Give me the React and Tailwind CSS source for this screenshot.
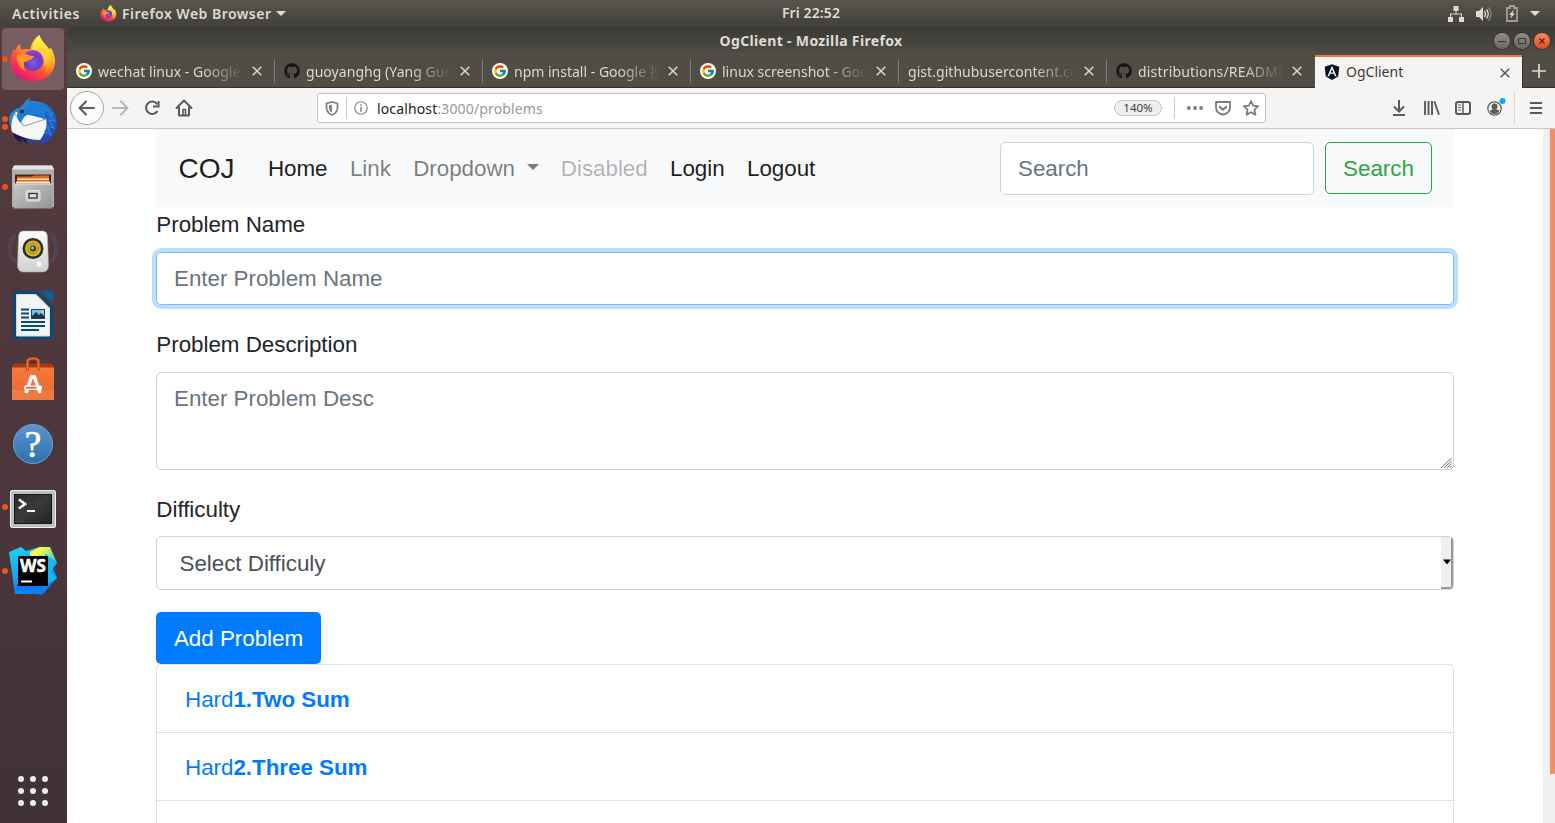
import React from "react";
import { FcGoogle } from "react-icons/fc";
import { FaGithub, FaAngular } from "react-icons/fa";

const tabs = [
  { icon: "google", title: "wechat linux - Google 搜索", spacing: "tracking-[0.03px]" },
  { icon: "github", title: "guoyanghg (Yang Guo)", spacing: "tracking-[0.05px]" },
  { icon: "google", title: "npm install - Google 搜索", spacing: "tracking-[0px]" },
  { icon: "google", title: "linux screenshot - Google", spacing: "tracking-[0px]" },
  { icon: null, title: "gist.githubusercontent.com", spacing: "tracking-[0.05px]" },
  { icon: "github", title: "distributions/README.md", spacing: "tracking-[0.18px]" },
];

function Caret({ className }) {
  return (
    <svg className={className} width="10" height="5" viewBox="0 0 10 5">
      <path d="M0 0h10L5 5z" fill="currentColor" />
    </svg>
  );
}

function Firefox({ size, id }) {
  return (
    <svg width={size} height={size} viewBox="0 0 48 48" className="shrink-0">
      <defs>
        <linearGradient id={id + "a"} x1="0.8" y1="0.05" x2="0.25" y2="0.95">
          <stop offset="0" stopColor="#fff44f" />
          <stop offset="0.35" stopColor="#ffa72a" />
          <stop offset="0.65" stopColor="#ff5034" />
          <stop offset="1" stopColor="#e8127c" />
        </linearGradient>
        <radialGradient id={id + "b"} cx="0.5" cy="0.6" r="0.6">
          <stop offset="0" stopColor="#7a5cf5" />
          <stop offset="0.6" stopColor="#6a3fc4" />
          <stop offset="1" stopColor="#b833e1" />
        </radialGradient>
        <linearGradient id={id + "c"} x1="0.4" y1="0" x2="0.7" y2="1">
          <stop offset="0" stopColor="#fff44f" />
          <stop offset="0.6" stopColor="#ffd02f" />
          <stop offset="1" stopColor="#ff8a1f" />
        </linearGradient>
      </defs>
      <path
        d="M11 9c0 3 .4 5 1.600 6C15 13.800 18 13.500 21 14.500 22 8 26 3 30.500 0c1.300 5.500 6 9 9.500 14l2-1c3 5 4.500 10 4 15-1 11.500-11 18.500-22 18.500S1 39 1.200 26C1.500 21 3 17 5 14l1 2c1-3 3-5.500 5-7z"
        fill={"url(#" + id + "a)"}
      />
      <path
        d="M30.500 0c1.300 5.500 6 9 9.500 14 5 8 3 19-4 25 2-6 1-13-2-17-3-4-9-5-11-7 .500-6 3-12 7.500-15z"
        fill={"url(#" + id + "c)"}
      />
      <circle cx="24" cy="25.500" r="10.500" fill={"url(#" + id + "b)"} />
      <path
        d="M8 20c4-2 8-2 11 0 2 1.200 4 .500 6 1-.500 2.500-3 3.500-6 4.500 0 0-1 2-4 1 0 4-1 6 2 10-6-3-10-9-9-16.500z"
        fill="#ff9722"
      />
      <path d="M28 15c8 3 9 11 6 17 5-4 7-12 3-17-2-2-6-2-9 0z" fill="#ffcb33" opacity="0.8" />
    </svg>
  );
}

function Thunderbird() {
  return (
    <svg width="50" height="50" viewBox="0 0 50 50">
      <defs>
        <linearGradient id="tb" x1="0.2" y1="0" x2="0.8" y2="1">
          <stop offset="0" stopColor="#2d9be8" />
          <stop offset="0.5" stopColor="#1769c9" />
          <stop offset="1" stopColor="#2a3f9e" />
        </linearGradient>
      </defs>
      <path
        d="M12 10C17 3 25 2 31 4c9 1 16 9 17.500 17 .500 3 0 5 0 7-1 10-9 18-18 20 2-2 3-3 4-5-4 2-8 1-12-1l2 5c-3-2-6-5-8-9l-1 4C10 38 2 32 1 22c0-6 5-11 11-12z"
        fill="url(#tb)"
      />
      <path d="M5 36c2 5 5 7 9 9l-1-5 7 7-2-6 8 3-20-10z" fill="#211554" />
      <path d="M8 14l30 7c2 7-1 14-6 21C23 42 12 39 4 34 2 27 4 19 8 14z" fill="#f7f7f7" />
      <path d="M7 16l9 12 22-7" fill="none" stroke="#a7abb0" strokeWidth="1.200" />
      <path d="M10 13c2-6 10-10 15-9 6 1 12 4 13 9l-2 9c-4-6-10-7-15-6-4 1-7 6-8 9-4-3-5-7-3-12z" fill="#1f7bd3" />
      <path d="M12 14C15 4 19 1 22 0c-1 2-1 3 0 5" fill="#2a86c8" />
      <path d="M36 10l9 6-4 0 6 7-6-1 5 8-7-2 4 9-7-4" fill="none" stroke="#2b87da" strokeWidth="1.100" />
      <circle cx="14" cy="13.500" r="2" fill="#332c2f" />
    </svg>
  );
}

function Files() {
  return (
    <svg width="44" height="46" viewBox="0 0 44 46">
      <defs>
        <linearGradient id="fl" x1="0" y1="0" x2="1" y2="1">
          <stop offset="0" stopColor="#c6c6c6" />
          <stop offset="1" stopColor="#949494" />
        </linearGradient>
      </defs>
      <path d="M3 1.500h38l2 4V43H1V5.500z" fill="#aeaeae" />
      <path d="M3 1.500h38l2 4H1z" fill="#e6e6e6" />
      <path d="M4 10.500h36v10H4z" fill="#4a2115" />
      <path d="M6 12.500h15l2-1h15v8H6z" fill="#e06a1c" />
      <path d="M6 14.500h32v1.500H6zM5 17.500h34v2H5z" fill="#fbe3c4" />
      <path d="M2.500 20h39v24.500h-39z" fill="url(#fl)" />
      <path d="M2.500 20h39" stroke="#e2e2e2" />
      <rect x="15" y="26.500" width="14" height="10.500" rx="2" fill="#d0d0d0" stroke="#e5e5e5" />
      <rect x="18" y="29.500" width="8" height="4.500" fill="#e2e2e2" stroke="#333" strokeWidth="1.300" />
    </svg>
  );
}

function Speaker() {
  return (
    <svg className="mt-[2px]" width="50" height="46" viewBox="0 0 50 46">
      <defs>
        <linearGradient id="sp" x1="0" y1="0" x2="0" y2="1">
          <stop offset="0" stopColor="#fdfdfd" />
          <stop offset="1" stopColor="#cfcfcf" />
        </linearGradient>
      </defs>
      <path
        d="M8 6c-7 9-7 19 0 28M5 6c-6 9-6 18 0 27M42 6c7 9 7 19 0 28M45 6c6 9 6 18 0 27"
        fill="none"
        stroke="#4c526a"
        strokeWidth="1.800"
        opacity="0.6"
      />
      <path d="M15 2h20q4 0 4.500 6l1 28q0 7-6 7H15.500q-6 0-6-7l1-28q.5-6 4.500-6z" fill="url(#sp)" stroke="#aaa" strokeWidth="0.600" />
      <circle cx="25" cy="19.500" r="10.500" fill="#2b2b28" />
      <circle cx="25" cy="19.500" r="8" fill="#d4b423" />
      <circle cx="25" cy="19.500" r="5" fill="none" stroke="#9d851c" strokeWidth="1" />
      <circle cx="25" cy="19.500" r="3" fill="#373737" />
      <circle cx="24.500" cy="19" r="1.500" fill="#bdbdbd" />
      <circle cx="31" cy="35" r="3.500" fill="#f4f4f4" stroke="#bbb" strokeWidth="0.600" />
    </svg>
  );
}

function Writer() {
  return (
    <svg width="40" height="48" viewBox="0 0 40 48">
      <path d="M2 0h22l16 15v31q0 2-2 2H2q-2 0-2-2V2q0-2 2-2z" fill="#064a75" />
      <path d="M27 0h11q2 0 2 2v10z" fill="#0a5f96" />
      <path d="M3.500 3.500H23L36.500 17v28h-33z" fill="#f3f3f3" stroke="#dadada" />
      <path d="M8 18.500h8M8 22.500h8M8 26.500h8M8 31h24M8 35h24M8 39h18" stroke="#064a75" strokeWidth="1.800" />
      <rect x="18.500" y="18.500" width="13" height="9" fill="#7bc0ea" stroke="#064a75" />
      <path d="M19 27v-2l4-4 3 3 2-2 3 3v2z" fill="#1f3643" />
      <circle cx="29.500" cy="20.500" r="1.500" fill="#f3d33a" />
    </svg>
  );
}

function Software() {
  return (
    <svg className="mt-[2px]" width="44" height="46" viewBox="0 0 44 46">
      <defs>
        <linearGradient id="sw" x1="0" y1="0" x2="0" y2="1">
          <stop offset="0" stopColor="#f4793c" />
          <stop offset="1" stopColor="#e9682f" />
        </linearGradient>
      </defs>
      <path d="M3 6.500h38l2 4v4H1v-4z" fill="#a53a14" />
      <path d="M1 10.500h42V43H1z" fill="url(#sw)" />
      <path d="M1 33h42v10H1z" fill="#f28c55" opacity="0.5" />
      <path d="M16.500 14V5q0-3.500 5.500-3.500T27.500 5v9" fill="none" stroke="#c9491a" strokeWidth="3" />
      <path d="M16.500 14V5q0-3.500 5.500-3.500T27.500 5v9" fill="none" stroke="#ee7440" strokeWidth="1.200" />
      <path d="M15 36l5.500-16h3L29 36" fill="none" stroke="#fff" strokeWidth="3.500" />
      <rect x="13" y="28.500" width="18" height="4.500" rx="1.500" fill="#fff" />
      <path d="M14.500 30.700h11" stroke="#e9682f" strokeWidth="1.800" />
    </svg>
  );
}

function Help() {
  return (
    <svg className="mt-[2px]" width="42" height="42" viewBox="0 0 42 42">
      <defs>
        <linearGradient id="hp" x1="0" y1="0" x2="0" y2="1">
          <stop offset="0" stopColor="#5d95cf" />
          <stop offset="1" stopColor="#2c71ae" />
        </linearGradient>
      </defs>
      <circle cx="21" cy="21" r="19.500" fill="url(#hp)" stroke="#6ba3d6" strokeWidth="1" />
      <text
        x="21"
        y="34"
        textAnchor="middle"
        fill="#fff"
        stroke="#fff"
        strokeWidth="0.700"
        fontSize="37"
        fontFamily="Liberation Serif, serif"
      >
        ?
      </text>
    </svg>
  );
}

function Terminal() {
  return (
    <svg className="mt-[3px]" width="46" height="38" viewBox="0 0 46 38">
      <defs>
        <linearGradient id="tm" x1="0" y1="0" x2="1" y2="1">
          <stop offset="0" stopColor="#2b2d2d" />
          <stop offset="0.5" stopColor="#383b3a" />
          <stop offset="1" stopColor="#202222" />
        </linearGradient>
      </defs>
      <rect x="0.500" y="0.500" width="45" height="37" rx="1.500" fill="#bdbdbd" stroke="#f0f0f0" />
      <rect x="4.500" y="4.500" width="37" height="29" fill="url(#tm)" stroke="#151515" />
      <path d="M9 9.500l6 4.500-6 4.500" fill="none" stroke="#fff" strokeWidth="2.600" />
      <path d="M17 21h8" stroke="#fff" strokeWidth="2" />
    </svg>
  );
}

function WebStorm() {
  return (
    <svg width="50" height="50" viewBox="0 0 50 50">
      <defs>
        <linearGradient id="ws" x1="0.3" y1="0" x2="0.7" y2="1">
          <stop offset="0" stopColor="#1bcdf0" />
          <stop offset="1" stopColor="#0a78f5" />
        </linearGradient>
        <linearGradient id="wy" x1="0" y1="0" x2="1" y2="0.8">
          <stop offset="0.3" stopColor="#fcf84a" />
          <stop offset="1" stopColor="#12c8dc" />
        </linearGradient>
      </defs>
      <path d="M1 6l12-5 5 4 13-4h11l-1 11 8 20-14 16H7z" fill="url(#ws)" />
      <path d="M22 6l10-5h10l7 16-5 6-22-8z" fill="url(#wy)" />
      <path d="M37 8l12 8-6 10 6 6-12 8z" fill="#13b6f0" />
      <path d="M8 38l27-1-1 12-27-5z" fill="#087bf8" />
      <rect x="10" y="10" width="30" height="30" fill="#000" />
      <text
        x="12"
        y="26"
        fill="#fff"
        stroke="#fff"
        strokeWidth="0.500"
        fontSize="17"
        textLength="26"
        lengthAdjust="spacingAndGlyphs"
        fontFamily="Open Sans, sans-serif"
        fontWeight="700"
      >
        WS
      </text>
      <path d="M13 35.500h11" stroke="#fff" strokeWidth="2" />
    </svg>
  );
}

function Dot() {
  return <span className="block h-[6px] w-[6px] rounded-full bg-[#e95420]" />;
}

const dock = [
  { el: <Firefox size={48} id="big" />, dots: 1, active: true },
  { el: <Thunderbird />, dots: 2 },
  { el: <Files />, dots: 1 },
  { el: <Speaker />, dots: 0 },
  { el: <Writer />, dots: 0 },
  { el: <Software />, dots: 0 },
  { el: <Help />, dots: 0 },
  { el: <Terminal />, dots: 1 },
  { el: <WebStorm />, dots: 1 },
];

function Dock() {
  return (
    <aside className="flex w-[67px] shrink-0 flex-col items-center bg-linear-to-b from-[#553b40] via-[#4d373c] to-[#403235] pt-px">
      <div className="flex w-full flex-col gap-[2px] pr-[3px] pl-[2px]">
        {dock.map((d, i) => (
          <div
            key={i}
            className={
              "relative flex h-[62px] items-center justify-center rounded-[4px] " + (d.active ? "bg-[#755d61]" : "")
            }
          >
            <div className="absolute top-0 left-0 flex h-full flex-col justify-center gap-[2px]">
              {Array.from({ length: d.dots }, (_, n) => (
                <Dot key={n} />
              ))}
            </div>
            {d.el}
          </div>
        ))}
      </div>
      <div className="mt-auto mr-[2px] mb-[17px] grid grid-cols-3 gap-[6px]">
        {Array.from({ length: 9 }, (_, n) => (
          <span key={n} className="h-[6px] w-[6px] rounded-full bg-[#eeeeec]" />
        ))}
      </div>
    </aside>
  );
}

function TopBar() {
  return (
    <header className="grid h-[27px] shrink-0 grid-cols-[1fr_auto_1fr] items-center bg-linear-to-b from-[#5a564d] to-[#413f3a] font-['Noto_Sans',sans-serif] text-[14px] font-semibold text-[#dfdbd2]">
      <div className="flex items-center pl-[12px]">
        <span className="w-[88px] tracking-[0.55px]">Activities</span>
        <Firefox size={17} id="small" />
        <span className="ml-[5px] tracking-[0.480px]">Firefox Web Browser</span>
        <Caret className="ml-[5px]" />
      </div>
      <span className="translate-x-[33.500px] -translate-y-px tracking-[0.1px]">Fri 22:52</span>
      <div className="flex items-center justify-end pr-[15px]">
        <svg width="16" height="16" viewBox="0 0 16 16" fill="currentColor">
          <path d="M5.500 0h5v5H8.500v2.500H14V11h2v5h-5v-5h2V8.500H3V11h2v5H0v-5h2V7.500h5.500V5h-2z" />
        </svg>
        <svg className="ml-[12px]" width="16" height="16" viewBox="0 0 16 16">
          <path d="M0 5h3l4-4v14l-4-4H0z" fill="currentColor" />
          <path d="M8.500 5q2 3 0 6M10.500 3.500q3.500 4.500 0 9" fill="none" stroke="currentColor" strokeWidth="1.300" />
          <path d="M12.500 1.500q5 6.500 0 13" fill="none" stroke="#858178" strokeWidth="1.400" />
        </svg>
        <svg className="ml-[14px]" width="12" height="17" viewBox="0 0 12 17">
          <path d="M4 1h4v2h3v13H1V3h3z" fill="none" stroke="#a29e95" strokeWidth="1.800" />
          <path d="M8 4.500L3 10h2.500L4 14l5-5.500H6.500z" fill="#dfdbd2" />
        </svg>
        <Caret className="ml-[12px]" />
      </div>
    </header>
  );
}

function TitleBar() {
  return (
    <div className="grid h-[28px] shrink-0 grid-cols-[1fr_auto_1fr] items-center bg-linear-to-b from-[#3b3a36] to-[#504d46]">
      <span />
      <span className="-translate-y-px tracking-[0.34px] font-['Noto_Sans',sans-serif] text-[14px] font-bold text-[#dfdbd2]">
        OgClient - Mozilla Firefox
      </span>
      <div className="flex items-center justify-end gap-[4px] pr-[5px]">
        <span className="flex h-[16px] w-[16px] items-center justify-center rounded-full bg-linear-to-b from-[#8f8c84] to-[#6b6861] shadow-[0_0_0_1px_#36342f]">
          <span className="h-px w-[8px] bg-[#3b3933]" />
        </span>
        <span className="flex h-[16px] w-[16px] items-center justify-center rounded-full bg-linear-to-b from-[#8f8c84] to-[#6b6861] shadow-[0_0_0_1px_#36342f]">
          <span className="h-[6px] w-[8px] border border-[#3b3933]" />
        </span>
        <span className="flex h-[16px] w-[16px] items-center justify-center rounded-full bg-linear-to-b from-[#f58a62] to-[#dd4814] shadow-[0_0_0_1px_#36342f]">
          <svg width="6" height="6" viewBox="0 0 6 6">
            <path d="M.5.5l5 5M5.500.5l-5 5" stroke="#4b2415" strokeWidth="1.300" />
          </svg>
        </span>
      </div>
    </div>
  );
}

function Close() {
  return (
    <svg width="10" height="10" viewBox="0 0 10 10" className="shrink-0">
      <path d="M.7.7l8.600 8.600M9.300.7L.7 9.300" stroke="currentColor" strokeWidth="1.500" />
    </svg>
  );
}

function Favicon({ kind }) {
  if (kind === "google")
    return (
      <span className="mr-[6px] flex h-[16px] w-[16px] shrink-0 items-center justify-center rounded-full bg-white">
        <FcGoogle size={14} />
      </span>
    );
  if (kind === "github") return <FaGithub size={16} className="mr-[6px] shrink-0 text-[#191717]" />;
  return null;
}

function TabStrip() {
  return (
    <div className="flex h-[33px] shrink-0 bg-[#504d46] font-['Noto_Sans','Noto_Sans_CJK_SC',sans-serif] text-[14px] text-[#dcd8cf]">
      {tabs.map((t, i) => (
        <div key={i} className="flex h-full w-[208px] shrink-0 items-center border-b border-[#33322e]">
          <div className="flex h-full min-w-0 flex-1 items-center pr-[12px] pl-[9px]">
            <Favicon kind={t.icon} />
            <span
              className={
                "min-w-0 flex-1 overflow-hidden whitespace-nowrap [mask-image:linear-gradient(to_left,transparent,black_42px)] " +
                t.spacing
              }
            >
              {t.title}
            </span>
            <span className="ml-[8px]">
              <Close />
            </span>
          </div>
          <span className={"h-[24px] w-px " + (i < 5 ? "bg-[#7c7972]" : "")} />
        </div>
      ))}
      <div className="flex w-[207px] shrink-0 items-center border-t-2 border-[#f07746] bg-[#f5f4f2] pr-[12px] pb-[2px] pl-[8px] text-[#3d3b37]">
        <FaAngular size={18} className="mr-[5px] text-[#0c1420]" />
        <span className="flex-1">OgClient</span>
        <span className="mt-[2px] text-[#5b5853]">
          <Close />
        </span>
      </div>
      <div className="flex flex-1 items-center justify-center border-b border-l border-[#33322e]">
        <svg width="14" height="14" viewBox="0 0 14 14">
          <path d="M7 0v14M0 7h14" stroke="currentColor" strokeWidth="1.700" />
        </svg>
      </div>
    </div>
  );
}

function Toolbar() {
  return (
    <div className="flex h-[41px] shrink-0 items-center border-b border-[#c9c7c4] bg-[#f5f4f2] pl-[3px] text-[#5c5a58]">
      <span className="flex h-[34px] w-[34px] items-center justify-center rounded-full border border-[#aaa8a5] bg-[#fcfcfb]">
        <svg width="18" height="16" viewBox="0 0 18 16" fill="none" stroke="currentColor" strokeWidth="2" strokeLinecap="round" strokeLinejoin="round">
          <path d="M16 8H2M8 1.500L1.500 8 8 14.500" />
        </svg>
      </span>
      <svg className="ml-[7px] text-[#b9b7b5]" width="18" height="16" viewBox="0 0 18 16" fill="none" stroke="currentColor" strokeWidth="2" strokeLinecap="round" strokeLinejoin="round">
        <path d="M2 8h14M10 1.500L16.500 8 10 14.500" />
      </svg>
      <svg className="ml-[15px]" width="17" height="16" viewBox="0 0 17 16">
        <path d="M13.300 4.200A6.200 6.200 0 1 0 13.500 11" fill="none" stroke="currentColor" strokeWidth="2" />
        <path d="M14.600 1v5.500H9" fill="none" stroke="currentColor" strokeWidth="2" />
      </svg>
      <svg className="ml-[14px]" width="18" height="18" viewBox="0 0 18 18" fill="none" stroke="currentColor" strokeWidth="2" strokeLinejoin="round" strokeLinecap="round">
        <path d="M1.500 9L9 1.500 16.500 9M4 8v8.500h10V8" />
        <path d="M8 16v-5.500h2.500V16" strokeWidth="1.600" />
      </svg>
      <div className="ml-[124px] flex h-[30px] w-[949px] items-center rounded-[3px] border border-[#c5c3c0] bg-white pr-[6px] pl-[7px]">
        <svg width="14" height="15" viewBox="0 0 14 15">
          <path d="M7 1l5.500 1.500V7Q12 12 7 14 2 12 1.500 7V2.500z" fill="none" stroke="#85837f" strokeWidth="1.800" />
          <path d="M7 3.500v8Q4 10 4 7V4.300z" fill="#85837f" />
        </svg>
        <span className="ml-[7px] h-[22px] w-px bg-[#cbc9c6]" />
        <svg className="ml-[7px]" width="14" height="14" viewBox="0 0 15 15">
          <circle cx="7.500" cy="7.500" r="6.700" fill="none" stroke="#85837f" strokeWidth="1.200" />
          <path d="M7.500 6.500V11.500M7.500 3.500v1.700" stroke="#85837f" strokeWidth="1.700" />
        </svg>
        <span className="ml-[9px] flex-1 font-['Noto_Sans',sans-serif] text-[14px] tracking-[0.140px] text-[#9a9895]">
          <span className="text-[#22211f]">localhost</span>:3000/problems
        </span>
        <span className="flex h-[16px] w-[48px] items-center justify-center rounded-full border border-[#c6c4c1] bg-[#f0efee] font-['Noto_Sans',sans-serif] text-[11.500px] text-[#3d3b39]">
          140%
        </span>
        <span className="ml-[12px] h-[22px] w-px bg-[#cbc9c6]" />
        <svg className="ml-[12px]" width="16" height="4" viewBox="0 0 17 4" fill="#7c7a77">
          <circle cx="2" cy="2" r="2" />
          <circle cx="8.500" cy="2" r="2" />
          <circle cx="15" cy="2" r="2" />
        </svg>
        <svg className="ml-[12px]" width="16" height="15" viewBox="0 0 16 15" fill="none" stroke="#7c7a77" strokeLinecap="round" strokeLinejoin="round">
          <path d="M1 1h14v5.500a7 7 0 0 1-14 0z" strokeWidth="1.800" />
          <path d="M4.700 5.700L8 8.800l3.300-3.100" strokeWidth="2" />
        </svg>
        <svg className="ml-[12px]" width="16" height="16" viewBox="0 0 16 16" fill="none" stroke="#7c7a77" strokeWidth="1.700" strokeLinejoin="round">
          <path d="M8 1l2.100 4.700 5 .5-3.700 3.400 1.100 5.200L8 12.200l-4.500 2.600 1.100-5.200L.9 6.200l5-.5z" />
        </svg>
      </div>
      <div className="flex flex-1 items-center justify-end pr-[13px]">
        <svg width="14" height="16" viewBox="0 0 14 16" fill="none" stroke="currentColor" strokeWidth="2">
          <path d="M7 0v11M2 6.500l5 5 5-5M1 15h12" />
        </svg>
        <svg className="ml-[18px]" width="16" height="14" viewBox="0 0 16 14" fill="none" stroke="currentColor" strokeWidth="1.900">
          <path d="M1 0v14M4.500 0v14M8 0v14M10.300 0.300L15 13.700" />
        </svg>
        <svg className="ml-[15px]" width="16" height="14" viewBox="0 0 16 14" fill="none" stroke="currentColor">
          <rect x="1" y="1" width="14" height="12" rx="2" strokeWidth="2" />
          <path d="M8 1v12" strokeWidth="1.500" />
          <path d="M3 4h3M3 6.500h3M3 9h3" />
        </svg>
        <svg className="ml-[16px]" width="19" height="20" viewBox="0 0 19 20">
          <circle cx="7.500" cy="10.500" r="6.700" fill="none" stroke="currentColor" strokeWidth="1.200" />
          <circle cx="7.500" cy="8.500" r="3" fill="currentColor" />
          <path d="M2.700 12.500q2-1.500 4.800-1.500t4.800 1.500q-1.500 3.500-4.800 3.500t-4.800-3.500z" fill="currentColor" />
          <circle cx="15.500" cy="3" r="3" fill="#00aeff" />
        </svg>
        <span className="ml-[8px] h-[34px] w-px bg-[#dbd9d6]" />
        <svg className="ml-[15px]" width="12" height="12" viewBox="0 0 12 12" stroke="currentColor" strokeWidth="2">
          <path d="M0 1h12M0 6h12M0 11h12" />
        </svg>
      </div>
    </div>
  );
}

function Navbar() {
  return (
    <nav className="flex h-[78px] items-center bg-[#f8f9fa] pt-[2px] pr-[22px] pl-[22.500px]">
      <span className="text-[28px] leading-[42px] text-black/90">COJ</span>
      <div className="ml-[33.500px] flex items-center gap-[22.400px] tracking-[-0.04px]">
        <span className="text-black/90">Home</span>
        <span className="text-black/50">Link</span>
        <span className="flex items-center text-black/50">
          Dropdown
          <svg className="mt-[-4px] ml-[12px]" width="12" height="6" viewBox="0 0 12 6">
            <path d="M0 0h12L6 6z" fill="currentColor" />
          </svg>
        </span>
        <span className="ml-[-0.500px] text-black/30">Disabled</span>
        <span className="text-black/90">Login</span>
        <span className="text-black/90">Logout</span>
      </div>
      <div className="mt-[-1px] ml-auto flex gap-[11px]">
        <div className="flex h-[53px] w-[314px] items-center rounded-[5px] border border-[#ced4da] bg-white pl-[17px] text-[#6c757d]">
          Search
        </div>
        <div className="flex h-[52px] w-[107px] items-center justify-center rounded-[5px] border border-[#28a745] pt-[2px] text-[#28a745]">
          Search
        </div>
      </div>
    </nav>
  );
}

const problems = [
  { level: "Hard", name: "1.Two Sum" },
  { level: "Hard", name: "2.Three Sum" },
  { level: "", name: "" },
];

function Page() {
  return (
    <div className="flex min-h-0 flex-1 overflow-hidden bg-white">
      <main className="ml-[89px] w-[1298px] shrink-0 font-['Liberation_Sans',Arial,sans-serif] text-[22.400px] leading-[34px] tracking-[-0.03px] text-[#212529]">
        <Navbar />
        <div className="h-[34px] pt-px pl-[0.300px]">Problem Name</div>
        <div className="mt-[11px] flex h-[53px] items-center rounded-[5px] border border-[#80bdff] bg-white pl-[17px] text-[#6c757d] shadow-[0_0_0_4px_#bfdeff]">
          Enter Problem Name
        </div>
        <div className="mt-[22px] h-[34px] pt-px pl-[0.300px]">Problem Description</div>
        <div className="mt-[11px] flex h-[98px] justify-between rounded-[5px] border border-[#ced4da] bg-white pt-[9px] pl-[17px] text-[#6c757d]">
          Enter Problem Desc
          <svg className="mr-px mb-px self-end" width="11" height="10" viewBox="0 0 11 10" stroke="#6e6e6e" strokeWidth="1">
            <path d="M0 10L10.500 0M3 10l7.500-7M6 10l4.500-4.500M8.500 10l2-2" />
          </svg>
        </div>
        <div className="mt-[22px] h-[34px] pt-px pl-[0.300px]">Difficulty</div>
        <div className="mt-[10px] flex h-[54px] items-center justify-between overflow-hidden rounded-[5px] border border-[#ced4da] bg-white pl-[22.500px] text-[#495057]">
          <span className="pt-[2px]">Select Difficuly</span>
          <span className="flex h-full w-[12px] items-center border-r-2 border-b-2 border-[#979797] bg-[#f1f0ef] pl-[2px] text-black">
            <svg width="8" height="6" viewBox="0 0 8 6" className="shrink-0">
              <path d="M0 .5h8L4 5.500z" fill="currentColor" />
            </svg>
          </span>
        </div>
        <div className="mt-[22px] flex h-[52px] w-[165px] items-center justify-center rounded-[5px] bg-[#007bff] pt-[2px] text-white">
          Add Problem
        </div>
        <div className="rounded-t-[5px] border border-b-0 border-[#dfdfdf]">
          {problems.map((p, i) => (
            <div key={i} className="flex h-[68px] items-center border-b border-[#dfdfdf] pt-[2px] pl-[28px] text-[#007bff]">
              {p.level}
              <b>{p.name}</b>
            </div>
          ))}
        </div>
      </main>
      <div className="ml-auto flex w-[12px] justify-end bg-[#f1f0ee]">
        <div className="h-[645px] w-[5px] rounded-b-[1px] bg-[#f28e67]" />
      </div>
    </div>
  );
}

export default function App() {
  return (
    <div className="flex h-[823px] w-[1555px] flex-col overflow-hidden">
      <TopBar />
      <div className="flex min-h-0 flex-1">
        <Dock />
        <div className="flex min-w-0 flex-1 flex-col">
          <TitleBar />
          <TabStrip />
          <Toolbar />
          <Page />
        </div>
      </div>
    </div>
  );
}
